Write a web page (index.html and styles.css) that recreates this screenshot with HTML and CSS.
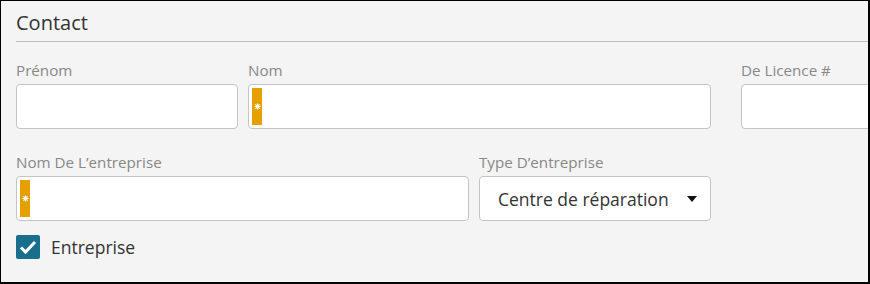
FILE: index.html
```html
<!DOCTYPE html>
<html lang="fr">
  <head>
    <meta charset="UTF-8" />
    <meta name="viewport" content="width=device-width, initial-scale=1.0" />
    <title>Contact</title>
    <link rel="stylesheet" href="styles.css">
  </head>
  <body>
    <div id="panel">
      <h2 class="title">Contact</h2>
      <div class="row">
        <div class="field w-first">
          <label>Prénom</label>
          <div class="box"></div>
        </div>
        <div class="field w-last">
          <label>Nom</label>
          <div class="box required"><span class="mark"><svg viewBox="0 0 8 8" width="8" height="8"><path d="M4 0.5v7M0.5 4h7M1.5 1.5l5 5M6.5 1.5l-5 5" stroke="#fff" stroke-width="1.4"/></svg></span></div>
        </div>
        <div class="field w-first licence">
          <label>De Licence #</label>
          <div class="box"></div>
        </div>
      </div>
      <div class="row">
        <div class="field w-company">
          <label>Nom De L’entreprise</label>
          <div class="box required"><span class="mark"><svg viewBox="0 0 8 8" width="8" height="8"><path d="M4 0.5v7M0.5 4h7M1.5 1.5l5 5M6.5 1.5l-5 5" stroke="#fff" stroke-width="1.4"/></svg></span></div>
        </div>
        <div class="field w-type">
          <label>Type D’entreprise</label>
          <div class="box select">
            <span>Centre de réparation</span>
            <span class="caret"></span>
          </div>
        </div>
      </div>
      <div class="check">
        <span class="tick"><svg viewBox="0 0 24 24" width="24" height="24"><path d="M5 12.5l4.5 4.5 9.5-10" fill="none" stroke="#fff" stroke-width="3"/></svg></span>
        <span>Entreprise</span>
      </div>
    </div>
  </body>
</html>
```

FILE: styles.css
```css
* {
  padding: 0;
  margin: 0;
  box-sizing: border-box;
}
body {
  font-family: "Open Sans", "Liberation Sans", sans-serif;
  background: #fff;
  overflow: hidden;
}
#panel {
  width: 870px;
  height: 284px;
  background-color: #f4f4f4;
  border-style: solid;
  border-color: #000;
  border-width: 1px 2px 2px 1px;
  padding: 8px 0 0 15px;
  overflow: hidden;
}
.title {
  font-size: 20px;
  font-weight: 400;
  line-height: 28px;
  color: #333;
  padding-bottom: 4px;
  border-bottom: 1px solid #bdbdbd;
  margin-bottom: 18px;
}
.row {
  display: flex;
  gap: 10px;
  width: 1100px;
  margin-bottom: 23px;
}
.field label {
  display: block;
  font-size: 15.2px;
  line-height: 20px;
  color: #888;
  margin-bottom: 4px;
}
.w-first {
  width: 222px;
  flex: none;
}
.w-last {
  width: 463px;
  flex: none;
}
.licence {
  margin-left: 20px;
}
.w-company {
  width: 453px;
  flex: none;
}
.w-type {
  width: 232px;
  flex: none;
}
.box {
  position: relative;
  height: 45px;
  background: #fff;
  border: 1px solid #c4c4c4;
  border-radius: 4px;
}
.mark {
  position: absolute;
  left: 3px;
  top: 3px;
  bottom: 3px;
  width: 10px;
  background: #e5a000;
  display: flex;
  align-items: center;
  justify-content: center;
}
.mark svg {
  width: 7px;
  height: 7px;
}
.select {
  display: flex;
  align-items: center;
  justify-content: space-between;
  padding: 0 13px 0 18px;
  font-size: 17.5px;
  color: #333;
}
.caret {
  width: 0;
  height: 0;
  border-left: 5px solid transparent;
  border-right: 5px solid transparent;
  border-top: 6px solid #111;
}
.check {
  display: flex;
  align-items: center;
  gap: 11px;
  margin-top: -9px;
  font-size: 17.5px;
  color: #333;
}
.tick {
  width: 24px;
  height: 24px;
  background: #176f8c;
  border-radius: 2px;
  display: flex;
}
```
